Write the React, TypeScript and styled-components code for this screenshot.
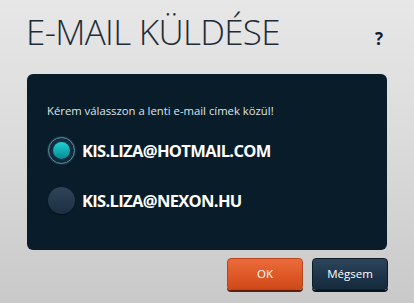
import React from "react";
import styled, { createGlobalStyle } from "styled-components";

const Global = createGlobalStyle`
  html, body { margin: 0; padding: 0; }
  body { font-family: "Open Sans", "DejaVu Sans", sans-serif; }
`;

const Screen = styled.div`
  width: 414px;
  height: 303px;
  box-sizing: border-box;
  background: linear-gradient(180deg, #e7e7e7 0%, #dadada 50%, #c9c9c9 100%);
  display: flex;
  flex-direction: column;
  padding: 0 27px 0 27px;
  overflow: hidden;
`;

const Header = styled.div`
  display: flex;
  justify-content: space-between;
  align-items: baseline;
  height: 74px;
  box-sizing: border-box;
  padding-top: 12px;
`;

const Title = styled.h1`
  margin: 0 0 0 -1px;
  font-family: "Open Sans", sans-serif;
  font-weight: 300;
  font-size: 35px;
  line-height: 40px;
  letter-spacing: -0.7px;
  color: #1d2c38;
`;

const Help = styled.span`
  font-family: "Open Sans", sans-serif;
  font-weight: 700;
  font-size: 17px;
  color: #13202b;
  margin-right: 4px;
`;

const Panel = styled.div`
  height: 176px;
  box-sizing: border-box;
  background: #081c2a;
  border-radius: 6px;
  padding: 29px 20px 0 20px;
  display: flex;
  flex-direction: column;
`;

const Prompt = styled.p`
  margin: 0 0 6px 0;
  font-size: 11.3px;
  line-height: 16px;
  color: #dfe4e8;
`;

const Option = styled.label`
  display: flex;
  align-items: center;
  gap: 7px;
  height: 50px;
  margin-left: 1px;
`;

const Radio = styled.span<{ $checked?: boolean }>`
  width: 27px;
  height: 27px;
  box-sizing: border-box;
  border-radius: 50%;
  display: flex;
  align-items: center;
  justify-content: center;
  flex: none;
  background: ${(p) =>
    p.$checked
      ? "radial-gradient(circle at 50% 40%, #1b3446 0%, #0e2333 100%)"
      : "linear-gradient(180deg, #2f4459 0%, #1c2f42 100%)"};
  border: ${(p) => (p.$checked ? "1.5px solid #5f93ab" : "none")};
  box-shadow: ${(p) =>
    p.$checked ? "0 0 2px rgba(100,170,200,0.5)" : "0 1px 1px rgba(0,0,0,0.5)"};
`;

const Dot = styled.span`
  width: 17px;
  height: 17px;
  border-radius: 50%;
  background: linear-gradient(180deg, #23d2d2 0%, #0fa8b0 55%, #0a8796 100%);
`;

const Email = styled.span`
  font-family: "Open Sans", sans-serif;
  font-weight: 700;
  font-size: 16.5px;
  letter-spacing: -0.65px;
  color: #ffffff;
`;

const Actions = styled.div`
  display: flex;
  justify-content: flex-end;
  gap: 9px;
  margin-top: 8px;
  margin-right: -1px;
`;

const Button = styled.button<{ $primary?: boolean }>`
  width: 76px;
  height: 32px;
  box-sizing: border-box;
  border-radius: 4px;
  font-family: "Open Sans", sans-serif;
  font-size: 11.5px;
  color: #ffffff;
  cursor: pointer;
  padding: 0 0 2px 0;
  border: 1px solid ${(p) => (p.$primary ? "#b8451a" : "#0d1b27")};
  background: ${(p) =>
    p.$primary
      ? "linear-gradient(180deg, #ec6b3c 0%, #df5a28 50%, #cf4a1a 100%)"
      : "linear-gradient(180deg, #2d465c 0%, #1f364b 50%, #152a3c 100%)"};
  box-shadow: ${(p) =>
    p.$primary ? "0 2px 0 #5a200c" : "0 2px 0 #0a1520"};
`;

export default function App() {
  return (
    <>
      <Global />
      <Screen>
        <Header>
          <Title>E-MAIL KÜLDÉSE</Title>
          <Help>?</Help>
        </Header>
        <Panel>
          <Prompt>Kérem válasszon a lenti e-mail címek közül!</Prompt>
          <Option>
            <Radio $checked>
              <Dot />
            </Radio>
            <Email>KIS.LIZA@HOTMAIL.COM</Email>
          </Option>
          <Option>
            <Radio />
            <Email>KIS.LIZA@NEXON.HU</Email>
          </Option>
        </Panel>
        <Actions>
          <Button $primary>OK</Button>
          <Button>Mégsem</Button>
        </Actions>
      </Screen>
    </>
  );
}
